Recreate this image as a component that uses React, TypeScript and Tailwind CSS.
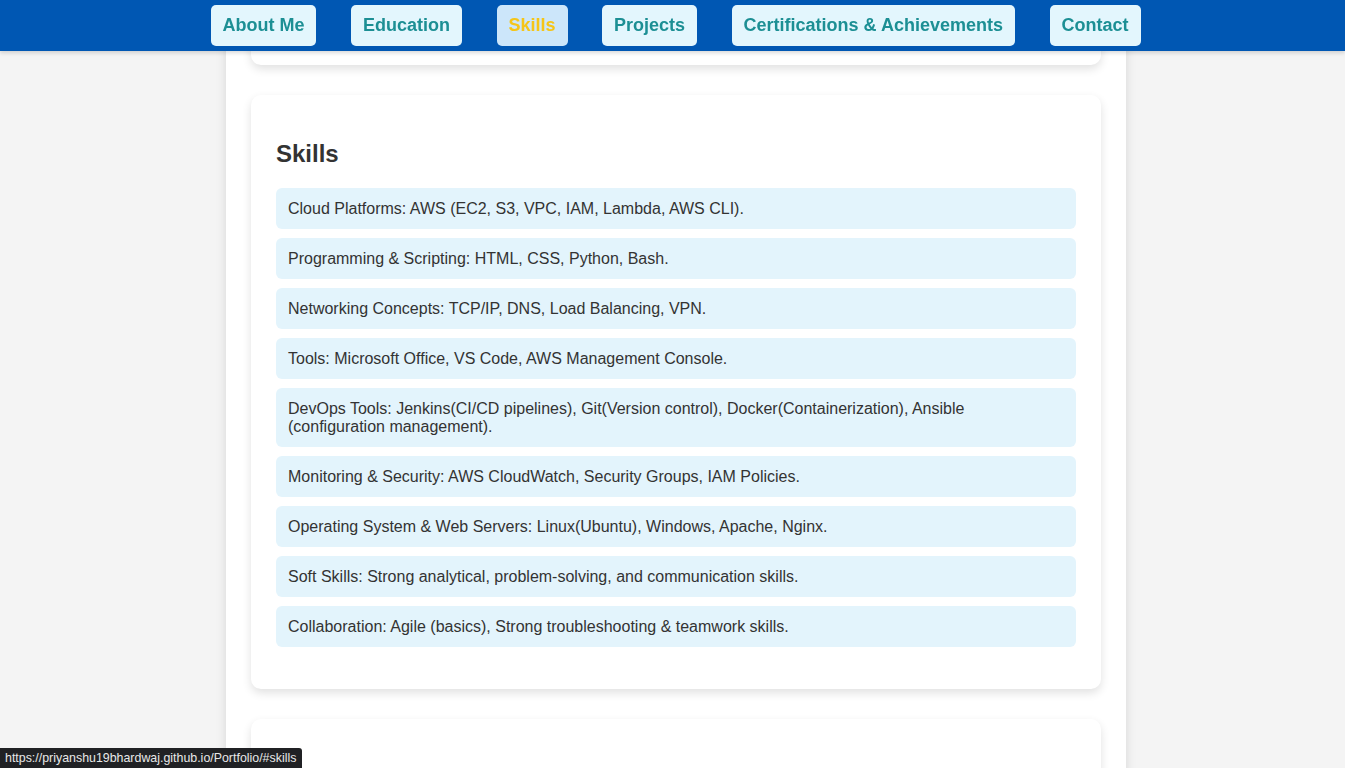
import * as React from "react";

const navItems = [
  "About Me",
  "Education",
  "Skills",
  "Projects",
  "Certifications & Achievements",
  "Contact",
];

const skills = [
  "Cloud Platforms: AWS (EC2, S3, VPC, IAM, Lambda, AWS CLI).",
  "Programming & Scripting: HTML, CSS, Python, Bash.",
  "Networking Concepts: TCP/IP, DNS, Load Balancing, VPN.",
  "Tools: Microsoft Office, VS Code, AWS Management Console.",
  "DevOps Tools: Jenkins(CI/CD pipelines), Git(Version control), Docker(Containerization), Ansible (configuration management).",
  "Monitoring & Security: AWS CloudWatch, Security Groups, IAM Policies.",
  "Operating System & Web Servers: Linux(Ubuntu), Windows, Apache, Nginx.",
  "Soft Skills: Strong analytical, problem-solving, and communication skills.",
  "Collaboration: Agile (basics), Strong troubleshooting & teamwork skills.",
];

export default function App() {
  return (
    <div className="h-[768px] overflow-hidden bg-[#f4f4f4] font-['Liberation_Sans',Arial,sans-serif] text-[#333] pl-[7px]">
      {/* Nav */}
      <nav className="fixed top-0 left-0 right-0 z-10 h-[51px] bg-[#0057b3] flex items-start justify-center pt-[5px] pl-[6px] shadow-[0_2px_4px_rgba(0,0,0,0.15)]">
        {navItems.map((item) => (
          <a
            key={item}
            href="#"
            className={
              item === "Skills"
                ? "mx-[17.25px] h-[41px] px-[12px] flex items-center rounded-[5px] bg-[#cce6fa] text-[#f5c518] text-[18px] font-bold"
                : "mx-[17.25px] h-[41px] px-[12px] flex items-center rounded-[5px] bg-[#e3f6fd] text-[#1c8f94] text-[18px] font-bold"
            }
          >
            {item}
          </a>
        ))}
      </nav>

      {/* Page */}
      <div className="w-[900px] mx-auto bg-white shadow-[0_0_10px_rgba(0,0,0,0.12)] px-[25px] h-[840px] flex flex-col gap-[30px] -mt-[60px]">
        {/* Previous card (bottom edge) */}
        <section className="h-[125px] shrink-0 bg-white rounded-[10px] shadow-[0_4px_10px_rgba(0,0,0,0.12)]" />

        {/* Skills */}
        <section className="shrink-0 bg-white rounded-[10px] shadow-[0_4px_10px_rgba(0,0,0,0.12)] px-[25px] pt-[45px] pb-[42px]">
          <h2 className="text-[24px] font-bold leading-[28px] mb-[20px] text-[#333]">Skills</h2>
          <ul className="flex flex-col gap-[9px]">
            {skills.map((s) => (
              <li
                key={s}
                className="bg-[#e3f4fc] rounded-[6px] px-[12px] py-[11.5px] text-[16px] leading-[18px] text-[#333]"
              >
                {s}
              </li>
            ))}
          </ul>
        </section>

        {/* Next card (top edge) */}
        <section className="h-[120px] shrink-0 bg-white rounded-[10px] shadow-[0_4px_10px_rgba(0,0,0,0.12)]" />
      </div>

      {/* Browser status bar */}
      <div className="fixed left-0 bottom-0 z-20 h-[20px] pl-[5px] pr-[6px] flex items-center bg-[#202124] text-[#e8e8e8] text-[12.4px] rounded-tr-[3px] font-['Liberation_Sans',sans-serif]">
        https://priyanshu19bhardwaj.github.io/Portfolio/#skills
      </div>
    </div>
  );
}
